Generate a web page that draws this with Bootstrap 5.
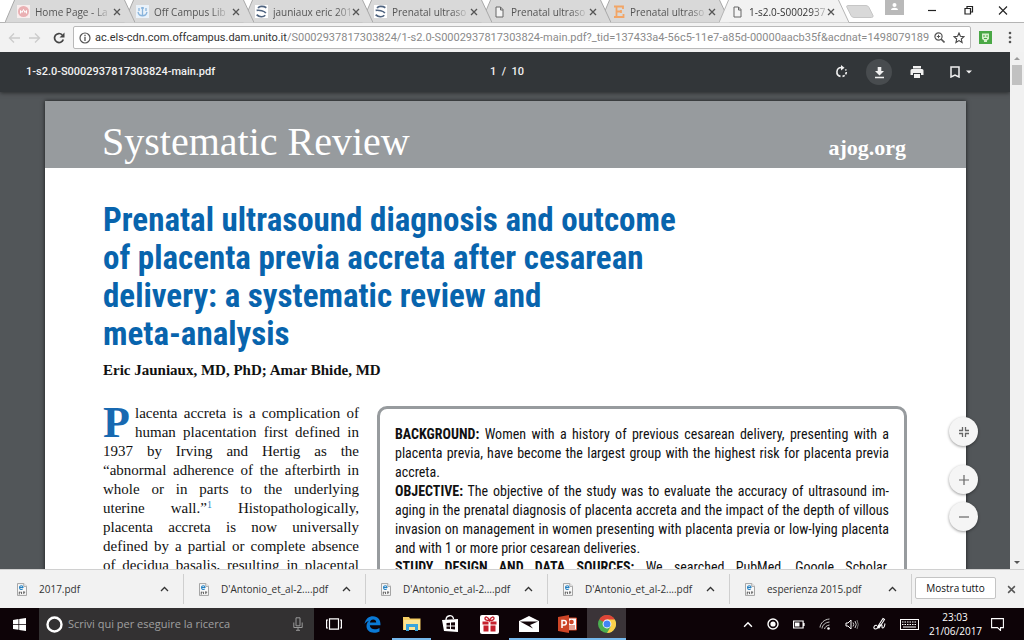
<!DOCTYPE html>
<html lang="it">
<head>
<meta charset="utf-8">
<meta name="viewport" content="width=device-width, initial-scale=1">
<title>1-s2.0-S0002937817303824-main.pdf</title>
<link href="https://cdn.jsdelivr.net/npm/bootstrap@5.3.0/dist/css/bootstrap.min.css" rel="stylesheet">
<style>
  body { font-family: "Open Sans", "Noto Sans", sans-serif; font-size: 10px; line-height: 16px; background: #fff; color: #333; }
  svg { display: block; flex: none; }
  button { background: none; border: 0; padding: 0; color: inherit; }
  a { color: inherit; text-decoration: none; }

  /* browser tabs */
  .tabstrip { height: 23px; padding-left: 5px; border-bottom: 1px solid #b4b4b4; }
  .tab { flex: 0 1 130px; min-width: 0; height: 23px; margin-right: -11px; padding: 0 14px 0 12px; isolation: isolate; }
  .tab .shape { position: absolute; inset: 0; width: 100%; height: 23px; fill: #d9d9d9; stroke: #a9a9a9; z-index: -1; }
  .tab.on .shape { fill: #f2f2f2; stroke: #b4b4b4; }
  .tab:nth-child(1) { z-index: 6; } .tab:nth-child(2) { z-index: 5; } .tab:nth-child(3) { z-index: 4; }
  .tab:nth-child(4) { z-index: 3; } .tab:nth-child(5) { z-index: 2; } .tab:nth-child(6) { z-index: 1; } .tab.on { z-index: 7; }
  .tab a { white-space: nowrap; color: #555; margin-left: 5px;
    -webkit-mask-image: linear-gradient(90deg, #000 80%, #0003); mask-image: linear-gradient(90deg, #000 80%, #0003); }
  .tab.on a { color: #333; }

  /* address bar */
  .navrow { height: 29px; background: #f2f2f2; padding: 0 8px; }
  .address { height: 23px; border: 1px solid #b9b9b9; border-radius: 2px; background: #fff; min-width: 0; padding: 0 5px; }
  .address a { font-family: Roboto, sans-serif; font-size: 11px; color: #8a8a8a; white-space: nowrap; margin-left: 4px; }
  .address a b { font-weight: 400; color: #333; }

  /* pdf viewer */
  .viewer { min-height: 0; background: #525659; }
  .pdfbar { height: 40px; background: #323639; color: #f1f1f1; font-family: Roboto, sans-serif; font-size: 11px; font-weight: 500; padding: 0 20px 0 26px; box-shadow: 0 1px 4px rgba(0,0,0,.5); z-index: 2; }
  .pdfbar > * { flex: 1 1 0; }
  .pdfbar .pages { padding-left: 16px; }
  .pdftools { gap: 12px; padding-right: 18px; }
  .round { width: 26px; height: 26px; border-radius: 50%; }
  .round.lit { background: #484c4f; }
  .sheet { margin: 9px 44px 0 45px; background: #fff; color: #111; height: 700px; box-shadow: 0 0 4px rgba(0,0,0,.7); }
  .masthead { height: 67px; background: #979b9e; color: #fff; font-family: "Liberation Serif", serif; padding: 0 60px 0 57px; }
  .masthead h2 { font-size: 40px; line-height: 48px; margin: 17px 0 0; font-weight: 400; }
  .masthead a { font-size: 22px; line-height: 24px; font-weight: 700; margin-top: 35px; }
  .paper { padding: 33px 59px 0 58px; }
  .paper h1 { font-family: "Roboto Condensed", Roboto, sans-serif; font-size: 33px; line-height: 38px; font-weight: 700; color: #0864ad; margin: 0; white-space: nowrap; }
  .author { font-family: "Liberation Serif", serif; font-size: 15px; line-height: 20px; font-weight: 700; margin: 7px 0 26px; }
  .intro { flex: 0 0 256px; font-family: "Liberation Serif", serif; font-size: 15px; line-height: 19px; text-align: justify; text-align-last: justify; white-space: nowrap; margin: -2px 18px 0 0; }
  .intro .cap { float: left; font-size: 44px; line-height: 38px; font-weight: 700; color: #1769b1; width: 32px; text-align: left; text-align-last: left; }
  .intro sup { font-size: 10px; line-height: 0; color: #2a84c0; }
  .abstract { min-width: 0; border: 3px solid #979b9e; border-radius: 10px; padding: 16px 15px 0; min-height: 300px; font-family: "Roboto Condensed", Roboto, sans-serif; font-size: 14px; line-height: 19px; text-align: justify; text-align-last: justify; white-space: nowrap; }
  .abstract p { margin: 0; }
  .ragged { display: block; text-align-last: left; }
  .zoomers { position: absolute; right: 32px; bottom: 38px; }
  .zoomers button { width: 29px; height: 29px; border-radius: 50%; background: #f5f5f5; box-shadow: 0 1px 3px rgba(0,0,0,.4); }
  .zoomers .fit { margin-bottom: 19px; }
  .scroller { flex: 0 0 14px; background: #f1f1f1; padding: 4px 0; }
  .scroller i { width: 10px; height: 20px; background: #c1c1c1; margin-top: 5px; }

  /* downloads shelf */
  .shelf { height: 39px; background: #f2f2f2; border-top: 1px solid #d0d0d0; padding-left: 2px; }
  .download { flex: 0 1 182px; min-width: 0; height: 30px; border-right: 1px solid #cfcfcf; padding: 0 14px 0 15px; }
  .download a { margin-left: 12px; white-space: nowrap; flex: 1 1 auto; }
  .showall { width: 81px; height: 22px; border: 1px solid #c4c4c4; border-radius: 2px; background: #fff; margin: 0 0 3px 3px; color: #111; }

  /* taskbar */
  .taskbar { height: 32px; background: #0d0307; color: #fff; }
  .start { flex: 0 0 39px; height: 32px; }
  .finder { flex: 0 0 275px; height: 32px; background: #333132; padding: 0 11px 0 7px; }
  .finder input { background: none; border: 0; outline: 0; padding: 0; font-size: 11px; line-height: 16px; color: #aaa; margin-left: 5px; min-width: 0; }
  .finder input::placeholder { color: #a0a0a0; opacity: 1; }
  .app { width: 39px; height: 32px; }
  .app.open { box-shadow: inset 0 -2px #76b9ed; }
  .app.front { background: #3b3438; }
  .tray { gap: 14px; }
  .status { gap: 10px; padding-right: 20px; }
  .clock { line-height: 14px; width: 52px; }
</style>
</head>
<body class="vh-100 d-flex flex-column overflow-hidden m-0">

<svg width="0" height="0" class="position-absolute" aria-hidden="true">
  <symbol id="edge" viewBox="0 0 130 23" preserveAspectRatio="none"><path d="M0 22.5 10 -1H119L130 22.5"/></symbol>
  <symbol id="x" viewBox="0 0 8 8"><path d="M1 1 7 7M7 1 1 7" stroke="#555" stroke-width="1.3"/></symbol>
  <symbol id="s" viewBox="0 0 12 12"><path fill="#fff" d="M0 0h12v12H0z"/><path d="M10.500 2.500C8 .8 3.500 .8 3 3M1.500 5C4 4.500 9 5.500 10 7.500M9.500 9.500C7.500 11.500 4 11 1.500 9" fill="none" stroke="#4f6480" stroke-width="1.500"/></symbol>
  <symbol id="doc" viewBox="0 0 9 12"><path d="M1 1h4.500L8 3.500V11H1zM5.500 1v3H8" fill="#f4f4f4" stroke="#666"/></symbol>
  <symbol id="pdf" viewBox="0 0 11 14"><path d="M.5.5h7l3 3v10H.5z" fill="#f8f8f8" stroke="#999"/><path d="M7.500.5v3h3" fill="#fff" stroke="#999"/><path d="M2.800 4.800h3.800C6.500 2.300 2.800 2.200 2.800 4.800s2.500 2.500 3.500 1.500" fill="none" stroke="#2380c2" stroke-width="1.200"/><path d="M2.500 12.500V9.500M5 12V9.500M7.500 12V9M2.500 10h1.500M7 10h2" stroke="#555"/></symbol>
  <symbol id="up" viewBox="0 0 9 6"><path d="M1 5 4.500 1.500 8 5" fill="none" stroke="currentColor" stroke-width="1.300"/></symbol>
</svg>

<header>
  <nav class="tabstrip d-flex" aria-label="Schede">
    <div class="tab position-relative d-flex align-items-center"><svg class="shape"><use href="#edge"/></svg>
      <svg width="13" height="13" viewBox="0 0 13 13"><path fill="#f8eeee" d="M0 0h13v13H0z"/><circle cx="6.500" cy="6.500" r="5.500" fill="#eab0b3"/><path d="M3.500 8.500v-3l1.500 2 1.500-3 1.500 3 1.500-2v3" stroke="#fff" fill="none"/></svg>
      <a href="#">Home Page - La</a><button class="ms-auto" aria-label="Chiudi"><svg width="8" height="8"><use href="#x"/></svg></button></div>
    <div class="tab position-relative d-flex align-items-center"><svg class="shape"><use href="#edge"/></svg>
      <svg width="13" height="13" viewBox="0 0 13 13"><path fill="#eaf2fa" d="M0 0h13v13H0z"/><path d="M6.500 2v9M5 3h3M2 7c1 5 8 5 9 0M3 3v3M10 3v3" stroke="#89b4dc" fill="none" stroke-width="1.300"/></svg>
      <a href="#">Off Campus Lib</a><button class="ms-auto" aria-label="Chiudi"><svg width="8" height="8"><use href="#x"/></svg></button></div>
    <div class="tab position-relative d-flex align-items-center"><svg class="shape"><use href="#edge"/></svg>
      <svg width="13" height="13"><use href="#s"/></svg>
      <a href="#">jauniaux eric 201</a><button class="ms-auto" aria-label="Chiudi"><svg width="8" height="8"><use href="#x"/></svg></button></div>
    <div class="tab position-relative d-flex align-items-center"><svg class="shape"><use href="#edge"/></svg>
      <svg width="13" height="13"><use href="#s"/></svg>
      <a href="#">Prenatal ultraso</a><button class="ms-auto" aria-label="Chiudi"><svg width="8" height="8"><use href="#x"/></svg></button></div>
    <div class="tab position-relative d-flex align-items-center"><svg class="shape"><use href="#edge"/></svg>
      <svg width="13" height="12"><use href="#doc"/></svg>
      <a href="#">Prenatal ultraso</a><button class="ms-auto" aria-label="Chiudi"><svg width="8" height="8"><use href="#x"/></svg></button></div>
    <div class="tab position-relative d-flex align-items-center"><svg class="shape"><use href="#edge"/></svg>
      <svg width="13" height="13" viewBox="0 0 13 13"><path d="M2 1.500h9v2.500M2 12h9.500V9M4.500 1.500V12M4.500 6.500H9M9 5v3" fill="none" stroke="#f2a566" stroke-width="1.800"/></svg>
      <a href="#">Prenatal ultraso</a><button class="ms-auto" aria-label="Chiudi"><svg width="8" height="8"><use href="#x"/></svg></button></div>
    <div class="tab on position-relative d-flex align-items-center"><svg class="shape"><use href="#edge"/></svg>
      <svg width="13" height="12"><use href="#doc"/></svg>
      <a href="#" aria-current="page">1-s2.0-S0002937</a><button class="ms-auto" aria-label="Chiudi"><svg width="8" height="8"><use href="#x"/></svg></button></div>
    <button class="ms-2" aria-label="Nuova scheda"><svg width="28" height="13" viewBox="0 0 28 13"><path d="M1.500.5H20q2 0 3 2l4 8q.5 2-1.500 2H8q-2 0-3-2L.8 2Q.5.5 1.500.5z" fill="#d9d9d9" stroke="#c6c6c6"/></svg></button>
    <div class="ms-auto d-flex align-items-start pe-3">
      <button class="me-4" aria-label="Profilo"><svg width="19" height="15" viewBox="0 0 19 15"><path fill="#b9b9b9" d="M0 0h19v15H0z"/><circle cx="9.500" cy="5" r="2" fill="#fff"/><path d="M6 10c0-3 7-3 7 0z" fill="#fff"/></svg></button>
      <button class="me-4" aria-label="Riduci"><svg width="12" height="21" viewBox="0 0 12 21"><path d="M0 10.500h8" stroke="#222" stroke-width="1.200"/></svg></button>
      <button class="me-4" aria-label="Ripristina"><svg width="10" height="21" viewBox="0 0 10 21"><path d="M1 8.500h5.500V14H1zM3 8V6.500h5.500V12H7" fill="none" stroke="#222" stroke-width="1.200"/></svg></button>
      <button aria-label="Chiudi finestra"><svg width="10" height="21" viewBox="0 0 10 21"><path d="M1 6.500 9 14.500M9 6.500 1 14.500" stroke="#222" stroke-width="1.100"/></svg></button>
    </div>
  </nav>

  <div class="navrow d-flex align-items-center">
    <button aria-label="Indietro"><svg width="13" height="12" viewBox="0 0 13 12"><path d="M12 6H1.500M6 1.500 1.500 6 6 10.500" fill="none" stroke="#ccc" stroke-width="1.400"/></svg></button>
    <button class="ms-2" aria-label="Avanti"><svg width="12" height="12" viewBox="0 0 12 12"><path d="M0 6h10.500M6 1.500 10.500 6 6 10.500" fill="none" stroke="#ccc" stroke-width="1.400"/></svg></button>
    <button class="ms-2 ps-1" aria-label="Ricarica"><svg width="12" height="12" viewBox="0 0 12 12"><path d="M10.300 7.500A4.500 4.500 0 1 1 9.200 2.800" fill="none" stroke="#444" stroke-width="1.700"/><path d="M11.500.5v5h-5z" fill="#444"/></svg></button>
    <div class="address flex-grow-1 d-flex align-items-center ms-2">
      <svg width="12" height="12" viewBox="0 0 12 12"><circle cx="6" cy="6" r="5" fill="none" stroke="#555" stroke-width="1.200"/><path d="M6 5v4M6 2.800v1.400" stroke="#555" stroke-width="1.300"/></svg>
      <a href="#"><b>ac.els-cdn.com.offcampus.dam.unito.it</b>/S0002937817303824/1-s2.0-S0002937817303824-main.pdf?_tid=137433a4-56c5-11e7-a85d-00000aacb35f&amp;acdnat=1498079189</a>
      <button class="ms-auto" aria-label="Zoom"><svg width="11" height="11" viewBox="0 0 11 11"><circle cx="4.500" cy="4.500" r="3.600" fill="none" stroke="#555" stroke-width="1.200"/><path d="M7 7l3.500 3.500" stroke="#555" stroke-width="1.600"/><path d="M2.800 4.500h3.400M4.500 2.800v3.400" stroke="#555"/></svg></button>
      <button class="ms-2" aria-label="Preferiti"><svg width="12" height="12" viewBox="0 0 12 12"><path d="M6 1l1.400 3.300 3.600.3-2.700 2.400.8 3.500L6 8.600l-3.100 1.900.8-3.500L1 4.600l3.600-.3z" fill="none" stroke="#444" stroke-width="1.100"/></svg></button>
    </div>
    <button class="ms-2" aria-label="Estensione"><svg width="13" height="13" viewBox="0 0 13 13"><path fill="#4aa846" d="M0 0h13v13H0z"/><path d="M3 2.500h7v5.500l-2 1.500v1.500H5V9.500L3 8z" fill="#d7f0cd"/><path d="M5 4v2M8 4v2M5 7.500h3" stroke="#4aa846"/></svg></button>
    <button class="ms-3 me-1" aria-label="Menu"><svg width="4" height="13" viewBox="0 0 4 13" fill="#555"><circle cx="2" cy="2" r="1.300"/><circle cx="2" cy="6.500" r="1.300"/><circle cx="2" cy="11" r="1.300"/></svg></button>
  </div>
</header>

<main class="viewer flex-grow-1 d-flex overflow-hidden">
  <div class="flex-grow-1 position-relative overflow-hidden">
    <div class="pdfbar position-relative d-flex align-items-center">
      <span>1-s2.0-S0002937817303824-main.pdf</span>
      <span class="pages text-center">1&nbsp; /&nbsp; 10</span>
      <span class="pdftools d-flex align-items-center justify-content-end">
        <button class="round d-flex align-items-center justify-content-center" aria-label="Ruota"><svg width="13" height="14" viewBox="0 0 13 14"><path d="M6.500 2.500A4.500 4.500 0 0 0 5.500 11.400" fill="none" stroke="#f1f1f1" stroke-width="1.600"/><path d="M6 0l3.500 2.700L6 5.400z" fill="#f1f1f1"/><path d="M7.500 11.400a4.500 4.500 0 0 0 3-7" fill="none" stroke="#f1f1f1" stroke-width="1.600" stroke-dasharray="2.400 1.400"/></svg></button>
        <button class="round lit d-flex align-items-center justify-content-center" aria-label="Scarica"><svg width="11" height="13" viewBox="0 0 11 13" fill="#f1f1f1"><path d="M3.700 1h3.600v4H10L5.500 9.500 1 5h2.700zM1 10.800h9v1.400H1z"/></svg></button>
        <button class="round d-flex align-items-center justify-content-center me-2" aria-label="Stampa"><svg width="14" height="12" viewBox="0 0 14 12" fill="#f1f1f1"><path d="M3 0h8v2.400H3zM2 3h10q1.500 0 1.500 1.500V9H11V7H3v2H.5V4.500Q.5 3 2 3zM4 8h6v4H4z"/></svg></button>
        <button class="d-flex align-items-center" aria-label="Segnalibri"><svg width="22" height="12" viewBox="0 0 22 12"><path d="M1 1h8v10L5 9l-4 2z" fill="none" stroke="#f1f1f1" stroke-width="1.500"/><path d="M16 4.500h6l-3 3z" fill="#f1f1f1"/></svg></button>
      </span>
    </div>

    <article class="sheet">
      <div class="masthead d-flex justify-content-between align-items-start"><h2>Systematic Review</h2><a href="#">ajog.org</a></div>
      <div class="paper">
        <h1>Prenatal ultrasound diagnosis and outcome<br>of placenta previa accreta after cesarean<br>delivery: a systematic review and<br>meta-analysis</h1>
        <p class="author">Eric Jauniaux, MD, PhD; Amar Bhide, MD</p>
        <div class="d-flex">
          <p class="intro"><span class="cap">P</span>lacenta accreta is a complication of<br>human placentation first defined in<br>1937 by Irving and Hertig as the<br>“abnormal adherence of the afterbirth in<br>whole or in parts to the underlying<br>uterine wall.”<sup>1</sup> Histopathologically,<br>placenta accreta is now universally<br>defined by a partial or complete absence<br>of decidua basalis, resulting in placental</p>
          <section class="abstract flex-grow-1">
            <p><b>BACKGROUND:</b> Women with a history of previous cesarean delivery, presenting with a<br>placenta previa, have become the largest group with the highest risk for placenta previa<br>accreta.</p>
            <p><b>OBJECTIVE:</b> The objective of the study was to evaluate the accuracy of ultrasound im-<br>aging in the prenatal diagnosis of placenta accreta and the impact of the depth of villous<br>invasion on management in women presenting with placenta previa or low-lying placenta<span class="ragged">and with 1 or more prior cesarean deliveries.</span></p>
            <p><b>STUDY DESIGN AND DATA SOURCES:</b> We searched PubMed, Google Scholar,</p>
          </section>
        </div>
      </div>
    </article>

    <div class="zoomers d-flex flex-column">
      <button class="fit d-flex align-items-center justify-content-center" aria-label="Adatta alla pagina"><svg width="10" height="10" viewBox="0 0 10 10"><path d="M3.500 0v3.500H0M6.500 0v3.500H10M3.500 10V6.500H0M6.500 10V6.500H10" fill="none" stroke="#666" stroke-width="1.300"/></svg></button>
      <button class="d-flex align-items-center justify-content-center" aria-label="Ingrandisci"><svg width="10" height="10" viewBox="0 0 10 10"><path d="M0 5h10M5 0v10" stroke="#666" stroke-width="1.200"/></svg></button>
      <button class="d-flex align-items-center justify-content-center mt-2" aria-label="Rimpicciolisci"><svg width="10" height="10" viewBox="0 0 10 10"><path d="M0 5h10" stroke="#666" stroke-width="1.200"/></svg></button>
    </div>
  </div>
  <div class="scroller d-flex flex-column align-items-center" aria-hidden="true">
    <svg width="6" height="4" viewBox="0 0 6 4"><path d="M0 4 3 1l3 3z" fill="#999"/></svg><i></i>
    <svg class="mt-auto" width="6" height="4" viewBox="0 0 6 4"><path d="M0 0h6L3 3z" fill="#555"/></svg>
  </div>
</main>

<footer>
  <div class="shelf d-flex align-items-center">
    <div class="download d-flex align-items-center"><svg width="10" height="13"><use href="#pdf"/></svg><a href="#">2017.pdf</a><button aria-label="Opzioni"><svg width="9" height="6"><use href="#up"/></svg></button></div>
    <div class="download d-flex align-items-center"><svg width="10" height="13"><use href="#pdf"/></svg><a href="#">D'Antonio_et_al-2....pdf</a><button aria-label="Opzioni"><svg width="9" height="6"><use href="#up"/></svg></button></div>
    <div class="download d-flex align-items-center"><svg width="10" height="13"><use href="#pdf"/></svg><a href="#">D'Antonio_et_al-2....pdf</a><button aria-label="Opzioni"><svg width="9" height="6"><use href="#up"/></svg></button></div>
    <div class="download d-flex align-items-center"><svg width="10" height="13"><use href="#pdf"/></svg><a href="#">D'Antonio_et_al-2....pdf</a><button aria-label="Opzioni"><svg width="9" height="6"><use href="#up"/></svg></button></div>
    <div class="download d-flex align-items-center"><svg width="10" height="13"><use href="#pdf"/></svg><a href="#">esperienza 2015.pdf</a><button aria-label="Opzioni"><svg width="9" height="6"><use href="#up"/></svg></button></div>
    <button class="showall d-flex align-items-center justify-content-center">Mostra tutto</button>
    <button class="ms-auto me-2" aria-label="Chiudi barra"><svg width="9" height="9"><use href="#x"/></svg></button>
  </div>

  <div class="taskbar d-flex align-items-center">
    <button class="start d-flex align-items-center justify-content-center" aria-label="Start"><svg width="13" height="13" viewBox="0 0 13 13" fill="#fff"><path d="M0 2l5.500-.9V6H0zM6.200 1 13 0v6H6.200zM0 6.800h5.500v5L0 11zM6.200 6.800H13V13l-6.800-1z"/></svg></button>
    <div class="finder d-flex align-items-center">
      <svg width="17" height="17" viewBox="0 0 17 17"><circle cx="8.500" cy="8.500" r="7" fill="none" stroke="#fff" stroke-width="2.400"/></svg>
      <input type="text" class="flex-grow-1" placeholder="Scrivi qui per eseguire la ricerca" aria-label="Cerca">
      <button aria-label="Microfono"><svg width="10" height="14" viewBox="0 0 10 14"><path d="M3 .8h4v8H3zM.8 5.500v5h8.400v-5M5 10.500V13M3 13.300h4" fill="none" stroke="#999"/></svg></button>
    </div>
    <button class="app d-flex align-items-center justify-content-center" aria-label="Visualizzazione attività"><svg width="16" height="12" viewBox="0 0 16 12"><path d="M3.500.8h9v10.400h-9zM2 2H.6v8H2M14 2h1.400v8H14" fill="none" stroke="#fff" stroke-width="1.200"/></svg></button>
    <button class="app d-flex align-items-center justify-content-center" aria-label="Edge"><svg width="17" height="17" viewBox="0 0 17 17"><path d="M.5 8C1.500 2.500 5 .2 9 .2c5 0 7.700 3.600 7.500 9H5.800c.2 2.500 2.200 4 5 4 1.700 0 3.400-.5 4.700-1.300v3.600c-1.500.8-3.400 1.300-5.500 1.300-4.500 0-7.500-2.700-7.500-6.700 0-2.400 1.100-4.400 3-5.600C3 5.200 1.500 6.500.5 8zm5.400-1.500h6.300c0-2-1.100-3-3-3-1.800 0-3 1.200-3.300 3z" fill="#0a7ad6"/></svg></button>
    <button class="app open d-flex align-items-center justify-content-center" aria-label="Esplora file"><svg width="18" height="16" viewBox="0 0 18 16"><path d="M0 1h6l1 1.500h10.500V14H0z" fill="#f6ce63"/><path d="M1 4h16v10H1z" fill="#fde595"/><path d="M3 8h12v7h-3v-4H6v4H3z" fill="#3aa5dc"/></svg></button>
    <button class="app d-flex align-items-center justify-content-center" aria-label="Store"><svg width="17" height="18" viewBox="0 0 17 18"><path d="M0 5 16 4v13L2 16z" fill="#fff"/><path d="M4 5C4 0 11-1 11.500 4" fill="none" stroke="#fff" stroke-width="1.300"/><path d="M4.500 8 8 7.700V10.500H4.500zM9 7.600l4-.3v3.200H9zM4.500 11.400H8V14l-3.500-.3zM9 11.400h4v3L9 14z" fill="#150509"/></svg></button>
    <button class="app d-flex align-items-center justify-content-center" aria-label="Regalo"><svg width="19" height="19" viewBox="0 0 19 19"><rect width="19" height="19" rx="2" fill="#fff"/><path d="M2.500 6.500h6v3h-6zM10.500 6.500h6v3h-6zM3.500 10.500h5v6h-5zM10.500 10.500h5v6h-5z" fill="#c5202d"/><path d="M9.500 5.500C8 1 5 1.500 5 3.500s3 2 4.500 2c1.500 0 4.500 0 4.500-2s-3-2.500-4.500 2z" fill="none" stroke="#c5202d" stroke-width="1.400"/></svg></button>
    <button class="app open d-flex align-items-center justify-content-center" aria-label="Posta"><svg width="20" height="16" viewBox="0 0 20 16"><path d="M0 5 10 0l10 5v11H0z" fill="#fff"/><path d="M1 5.500h18L11 9l3 3.500z" fill="#120408"/></svg></button>
    <button class="app open d-flex align-items-center justify-content-center" aria-label="PowerPoint"><svg width="19" height="18" viewBox="0 0 19 18"><path d="M10 3h8.500v12H10z" fill="#fff" stroke="#cd4527"/><circle cx="13.500" cy="7" r="2.300" fill="#cd4527"/><path d="M11 11h6M11 13h6" stroke="#cd4527"/><path d="M0 2 11 0v18L0 16z" fill="#cd4527"/><path d="M4 13V5.500h2q2.300 0 2.300 2.200T6 10H4" fill="none" stroke="#fff" stroke-width="1.500"/></svg></button>
    <button class="app open front d-flex align-items-center justify-content-center" aria-label="Chrome"><svg width="18" height="18" viewBox="0 0 18 18"><circle cx="9" cy="9" r="9" fill="#4caf50"/><path d="M9 9 1.200 4.500A9 9 0 0 1 16.800 4.500z" fill="#de4437"/><path d="M9 4.500h7.800A9 9 0 0 1 9 18l4-7z" fill="#fcd04b"/><circle cx="9" cy="9" r="4.400" fill="#fff"/><circle cx="9" cy="9" r="3.500" fill="#4285f4"/></svg></button>

    <div class="status ms-auto d-flex align-items-center">
      <div class="tray d-flex align-items-center">
        <button aria-label="Icone nascoste"><svg width="10" height="7"><use href="#up"/></svg></button>
        <svg width="12" height="12" viewBox="0 0 12 12"><circle cx="6" cy="6" r="5" fill="none" stroke="#fff" stroke-width="1.400"/><circle cx="6" cy="6" r="2.600" fill="#fff"/></svg>
        <svg width="12" height="9" viewBox="0 0 12 9"><path d="M.6 1h9.500v7H.6zM11 3v3" fill="none" stroke="#fff" stroke-width="1.200"/><path d="M2 2.500h4.500v4H2z" fill="#fff"/></svg>
        <svg width="12" height="12" viewBox="0 0 12 12"><path d="M1 9.500C1.500 5 5 1.500 10.500 1M3 10.500C3.500 7 6 4.500 10.500 4M5.500 11C6 9 7.500 7.500 10.500 7" fill="none" stroke="#ccc"/><circle cx="9.500" cy="10.500" r="1.300" fill="#fff"/></svg>
        <svg width="14" height="11" viewBox="0 0 14 11"><path d="M1 4h2l3-3v9L3 7H1z" fill="none" stroke="#fff"/><path d="M8 3.500q1.500 2 0 4M10 2q2.500 3.500 0 7" fill="none" stroke="#ccc"/><path d="M12 1q2.500 4.500 0 9" fill="none" stroke="#777"/></svg>
        <svg width="13" height="14" viewBox="0 0 13 14"><path d="M4 8.500C1 7.500-.5 12 2.500 12S6 8 8 7.500s0 4 2 3.500 1.500-3 2-4.500M4.500 10 10 1.500l1.500 1L6 11z" fill="none" stroke="#fff" stroke-width="1.100"/></svg>
        <svg width="19" height="11" viewBox="0 0 19 11"><rect x=".5" y=".5" width="18" height="10" fill="none" stroke="#fff"/><path d="M2 3h15M2 5.500h15" stroke="#fff" stroke-dasharray="1.500 1"/><path d="M3 8h13" stroke="#fff"/></svg>
      </div>
      <div class="clock text-center flex-shrink-0">23:03<br>21/06/2017</div>
      <button aria-label="Notifiche"><svg width="13" height="13" viewBox="0 0 13 13"><path d="M.6.600h11.800v9H9.500v2.800L6.500 9.600H.6z" fill="none" stroke="#fff" stroke-width="1.100"/></svg></button>
    </div>
  </div>
</footer>
<script src="https://cdn.jsdelivr.net/npm/bootstrap@5.3.0/dist/js/bootstrap.bundle.min.js"></script>
</body>
</html>
